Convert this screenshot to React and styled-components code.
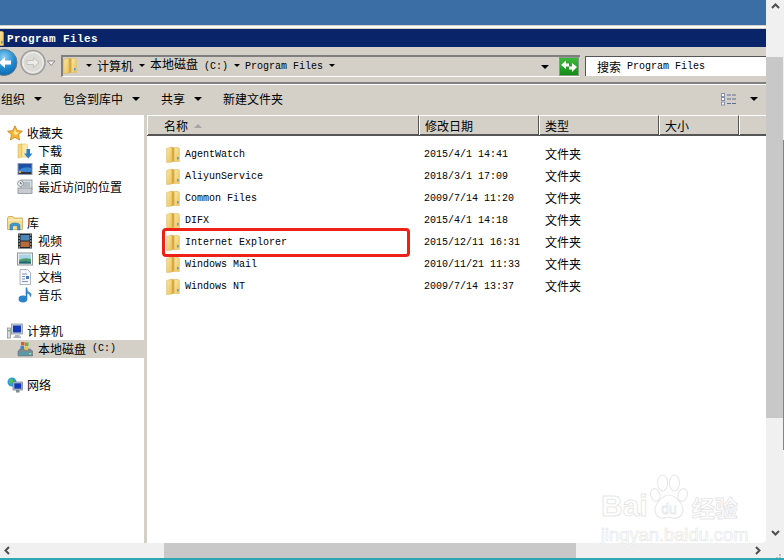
import React from "react";
import styled, { createGlobalStyle } from "styled-components";

const cjk = `"Noto Sans CJK SC", "Liberation Sans", sans-serif`;
const mono = `"Liberation Mono", "Noto Sans CJK SC", monospace`;
const face = "#d4d0c8";

const Global = createGlobalStyle`
	html, body {
		margin: 0;
		background: #fff;
		overflow: hidden;
	}
`;

const Screen = styled.div`
	position: relative;
	width: 784px;
	height: 560px;
	display: flex;
	flex-direction: column;
	overflow: hidden;
	font-family: ${cjk};
	font-size: 12px;
	line-height: 18px;
	color: #000;
	background: #f0f0f0;
`;

const TopArea = styled.div`
	display: flex;
	height: 543px;
`;

const Explorer = styled.div`
	width: 766px;
	display: flex;
	flex-direction: column;
	border-bottom-right-radius: 3px;
	overflow: hidden;
	background: ${face};
`;

const DesktopBand = styled.div`
	height: 25px;
	background: #3a6ea5;
`;

const WindowEdge = styled.div`
	height: 4px;
	background: #fff;
	border-top: 1px solid ${face};
	border-bottom: 1px solid ${face};
	box-sizing: border-box;
`;

const TitleBar = styled.div`
	height: 18px;
	box-sizing: border-box;
	padding-top: 1px;
	display: flex;
	align-items: center;
	background: #0a246a;
	color: #fff;
	font-family: ${mono};
	font-size: 11px;
	font-weight: 700;
	letter-spacing: 0.4px;
	overflow: hidden;

	svg {
		margin-left: -10px;
		margin-right: 3px;
		flex: none;
	}
`;

const AddressRow = styled.div`
	height: 37px;
	box-sizing: border-box;
	padding-top: 8px;
	display: flex;
	align-items: flex-start;
	border-bottom: 2px solid #808080;
`;

const NavGroup = styled.div`
	position: relative;
	width: 61px;
	height: 21px;
	flex: none;

	svg {
		position: absolute;
		top: -6px;
		left: 0;
	}
`;

const AddressBox = styled.div`
	width: 519px;
	height: 22px;
	box-sizing: border-box;
	display: flex;
	align-items: center;
	border: 2px solid #808080;
	border-right: 0;
	border-bottom: 1px solid #fff;
	flex: none;
`;

const Crumbs = styled.div`
	display: flex;
	align-items: center;
	flex: 1;
	height: 100%;
	padding-bottom: 2px;
	box-sizing: border-box;

	svg {
		margin-right: 9px;
		flex: none;
	}
`;

const Crumb = styled.span`
	white-space: pre;
	margin-right: 6px;
`;

const Latin = styled.span`
	font-family: ${mono};
	font-size: 10px;
`;

const Arrow = styled.i`
	display: block;
	flex: none;
	width: 0;
	height: 0;
	border-left: ${(p) => p.$size || 3}px solid transparent;
	border-right: ${(p) => p.$size || 3}px solid transparent;
	border-top: ${(p) => p.$size || 3}px solid #000;
`;

const CrumbArrow = styled(Arrow)`
	margin-right: 5px;
`;

const HistoryArrow = styled(Arrow)`
	margin: 0 10px;
`;

const GoButton = styled.div`
	width: 20px;
	height: 19px;
	margin-right: 1px;
	flex: none;
`;

const SearchBox = styled.div`
	margin: 1px 0 0 5px;
	flex: 1;
	height: 20px;
	box-sizing: border-box;
	display: flex;
	align-items: center;
	background: #fff;
	border-top: 1px solid #555;
	border-left: 1px solid #555;
	padding-left: 11px;
	white-space: pre;
`;

const CommandBar = styled.div`
	height: 31px;
	box-sizing: border-box;
	border-top: 1px solid #fff;
	padding: 0 8px 2px 1px;
	display: flex;
	align-items: center;
`;

const Command = styled.div`
	display: flex;
	align-items: center;
	margin-right: 21px;
	white-space: nowrap;

	${Arrow} {
		margin-left: 9px;
	}
`;

const ViewSwitch = styled.div`
	margin-left: auto;
	display: flex;
	align-items: center;

	${Arrow} {
		margin-left: 13px;
	}
`;

const Panes = styled.div`
	flex: 1;
	display: flex;
	min-height: 0;
`;

const NavPane = styled.div`
	width: 144px;
	box-sizing: border-box;
	padding-top: 9px;
	background: #fff;
	flex: none;
`;

const TreeGroup = styled.div`
	margin-bottom: 18px;
`;

const TreeRow = styled.div`
	height: 18px;
	display: flex;
	align-items: center;
	white-space: pre;
	padding-left: ${(p) => (p.$child ? 17 : 7)}px;
	background: ${(p) => (p.$selected ? face : "transparent")};

	svg {
		flex: none;
		margin-right: ${(p) => (p.$child ? 5 : 4)}px;
	}
`;

const Content = styled.div`
	margin-left: 3px;
	flex: 1;
	display: flex;
	flex-direction: column;
	background: #fff;
`;

const HeaderRow = styled.div`
	height: 19px;
	display: grid;
	grid-template-columns: 272px 120px 120px 80px 1fr;
	background: ${face};
	border-bottom: 2px solid #555;
`;

const HeaderCell = styled.div`
	display: flex;
	align-items: center;
	box-sizing: border-box;
	padding-top: 1px;
	border-top: 1px solid #fff;
	border-left: 1px solid #fff;
	border-right: ${(p) => (p.$last ? "0" : "1px solid #555")};
	padding-left: ${(p) => p.$pad || 5}px;
`;

const SortArrow = styled.i`
	display: block;
	width: 0;
	height: 0;
	margin-left: 6px;
	border-left: 4px solid transparent;
	border-right: 4px solid transparent;
	border-bottom: 4px solid #a5a5a5;
`;

const FileList = styled.div`
	padding-top: 7px;
`;

const FileRow = styled.div`
	height: 22px;
	display: grid;
	grid-template-columns: 272px 120px 1fr;
	align-items: center;
`;

const FileName = styled.div`
	display: flex;
	align-items: center;
	padding-left: 19px;
	white-space: pre;

	svg {
		margin-right: 5px;
	}
`;

const NameText = styled(Latin)`
	display: block;
	padding-top: 2px;
`;

const FileDate = styled(Latin)`
	display: block;
	padding: 2px 0 0 5px;
`;

const FileType = styled.div`
	padding-left: 6px;
`;

const VScroll = styled.div`
	position: relative;
	flex: 1;
	background: #f0f0f0;

	&::after {
		content: "";
		position: absolute;
		top: 140px;
		right: 0;
		width: 1px;
		height: 310px;
		background: #2fa6b4;
	}
`;

const ScrollArrow = styled.div`
	display: flex;
	justify-content: center;
	height: 15px;
	padding-top: 2px;
	box-sizing: border-box;
`;

const VThumb = styled.div`
	height: 361px;
	margin-top: 42px;
	margin-right: 1px;
	background: #c8c8c8;
`;

const VBottomArrow = styled(ScrollArrow)`
	margin-top: 108px;
`;

const HScroll = styled.div`
	height: 15px;
	display: flex;
	align-items: center;
	background: #f0f0f0;
`;

const HArrow = styled.div`
	display: flex;
	align-items: center;
	margin-left: ${(p) => p.$left}px;
`;

const HThumb = styled.div`
	width: 412px;
	height: 15px;
	margin-left: 152px;
	background: #c8c8c8;
`;

const Grip = styled.div`
	margin-left: 11px;
	width: 9px;
	height: 9px;
	margin-top: 5px;
`;

const TealLine = styled.div`
	height: 2px;
	background: #2fa6b4;
`;

const RedBox = styled.div`
	position: absolute;
	left: 162px;
	top: 228px;
	width: 248px;
	height: 29px;
	box-sizing: border-box;
	border: 3px solid #ee2118;
	border-radius: 4px;
`;

const Watermark = styled.div`
	position: absolute;
	left: 601px;
	top: 474px;
	width: 142px;
	color: #fff;
	-webkit-text-stroke: 1px #e8e8e8;
	pointer-events: none;
`;

const MarkTop = styled.div`
	display: flex;
	align-items: flex-end;
	height: 47px;
	white-space: nowrap;
`;

const MarkWord = styled.span`
	font-family: "Liberation Sans", sans-serif;
	font-weight: 700;
	font-size: 30px;
	line-height: 30px;
`;

const MarkCjk = styled.span`
	margin-left: 2px;
	font-size: 23px;
	line-height: 28px;
	font-weight: 700;
`;

const MarkUrl = styled.div`
	font-family: "Liberation Sans", sans-serif;
	font-size: 18.3px;
	line-height: 22px;
	margin-top: 3px;
	white-space: nowrap;
	-webkit-text-stroke: 0.7px #e8e8e8;
`;

const Folder = () => (
	<svg width="14" height="17" viewBox="0 0 14 17">
		<defs>
			<linearGradient id="folderLeaf" x1="0" y1="0" x2="1" y2="1">
				<stop offset="0" stopColor="#f9e6a0" />
				<stop offset="1" stopColor="#ecc45e" />
			</linearGradient>
		</defs>
		<path d="M.7 2.5 6 1V16L.7 16.5Z" fill="url(#folderLeaf)" stroke="#d8b35c" strokeWidth="0.6" />
		<path d="M6 1 8.5 1.5V15.5L6 16Z" fill="#d9a93f" />
		<path d="M8.5 1.5H12.4L13.4 2.5V15.5H8.5Z" fill="url(#folderLeaf)" stroke="#e0bd66" strokeWidth="0.6" />
		<rect x="11" y="11" width="1.6" height="2.4" fill="#4f9fd0" />
	</svg>
);

const Star = () => (
	<svg width="16" height="16" viewBox="0 0 16 16">
		<path d="M8 .8 10.2 5.6 15.4 6.2 11.5 9.7 12.6 15 8 12.3 3.4 15 4.5 9.7.6 6.2 5.8 5.6Z" fill="#f8b52e" stroke="#c97f1a" strokeWidth="0.8" />
		<path d="M8 4 9.2 7 12 7.5 9.8 9.5 8 10 6.5 8Z" fill="#ffe9a0" />
	</svg>
);

const Downloads = () => (
	<svg width="16" height="16" viewBox="0 0 16 16">
		<path d="M1 1.5 5 .8V14L1 15Z" fill="#f5d679" stroke="#d6ab4a" strokeWidth="0.5" />
		<path d="M5 1H9.5L10.5 2V14H5Z" fill="#fbe9ad" stroke="#dcb65a" strokeWidth="0.5" />
		<path d="M9.5 6H13V10.5H15.5L11.2 15.5 7 10.5H9.5Z" fill="#2a7fc8" />
	</svg>
);

const Desktop = () => (
	<svg width="16" height="16" viewBox="0 0 16 16">
		<rect x="0.5" y="2" width="15" height="12" fill="#8d9cb3" />
		<rect x="1.5" y="3" width="13" height="8" fill="#1d4fa5" />
		<path d="M1.5 9 Q7 5 14.5 7 V11 H1.5Z" fill="#3a86d4" />
		<rect x="1.5" y="11" width="13" height="2" fill="#2d3442" />
		<rect x="2" y="10" width="2" height="2" fill="#e8a52e" />
	</svg>
);

const Recent = () => (
	<svg width="16" height="16" viewBox="0 0 16 16">
		<rect x="4" y="1" width="11" height="9" fill="#d9dee2" stroke="#8a9298" strokeWidth="0.8" />
		<rect x="6" y="3" width="7" height="5" fill="#b2bcc4" />
		<rect x="1" y="9" width="14" height="5.5" fill="#c6ccd0" stroke="#8a9298" strokeWidth="0.8" />
		<circle cx="3.5" cy="4.5" r="3" fill="#e5e9ec" stroke="#7d858b" strokeWidth="0.8" />
		<path d="M3.5 3V4.7H5" stroke="#444" strokeWidth="0.7" fill="none" />
	</svg>
);

const Library = () => (
	<svg width="16" height="16" viewBox="0 0 16 16">
		<path d="M.5 3V14.5H15.5V3H7L6 1.5H1.5Z" fill="#f6dd93" stroke="#c9a655" strokeWidth="0.8" />
		<path d="M1 5H15" stroke="#fff3c9" />
		<path d="M3 15V10.5Q3 8 8 8T13 10.5V15H10.5V11Q8 10 5.5 11V15Z" fill="#3a96cf" stroke="#1f6c9f" strokeWidth="0.5" />
	</svg>
);

const Video = () => (
	<svg width="16" height="16" viewBox="0 0 16 16">
		<rect x="1" y="0.5" width="14" height="15" fill="#20262c" />
		<rect x="3.5" y="2" width="9" height="5.5" fill="#4d87b8" />
		<rect x="3.5" y="8.5" width="9" height="5.5" fill="#b76a3a" />
		<path d="M1.5 2H3M1.5 5H3M1.5 8H3M1.5 11H3M1.5 14H3M13 2H14.5M13 5H14.5M13 8H14.5M13 11H14.5M13 14H14.5" stroke="#cfd6dc" />
	</svg>
);

const Pictures = () => (
	<svg width="16" height="16" viewBox="0 0 16 16">
		<rect x="0.5" y="2" width="15" height="12" fill="#f3f3f3" stroke="#8e9499" />
		<rect x="2" y="3.5" width="12" height="9" fill="#a9d3e8" />
		<path d="M2 9Q7 6 14 8V12.5H2Z" fill="#4c9a6c" />
		<path d="M2 11Q8 9.5 14 11V12.5H2Z" fill="#26667c" />
	</svg>
);

const Documents = () => (
	<svg width="16" height="16" viewBox="0 0 16 16">
		<path d="M3 .5H10.5L13.5 3.5V15.5H3Z" fill="#f6f7fa" stroke="#9aa3ad" strokeWidth="0.8" />
		<path d="M5 5H10M5 7.5H8M5 10H8M5 12.5H11" stroke="#8490b4" />
		<rect x="9" y="7" width="3" height="3" fill="#3f7cc4" />
	</svg>
);

const Music = () => (
	<svg width="16" height="16" viewBox="0 0 16 16">
		<path d="M9.5 .5V11" stroke="#2f7dc3" strokeWidth="1.6" />
		<path d="M9.5 .5Q10 4 13 5.5T13 10.5Q13 7 10 6.5Z" fill="#3f8fd0" />
		<ellipse cx="6" cy="12" rx="4.4" ry="3.4" fill="#2a83cd" />
	</svg>
);

const Computer = () => (
	<svg width="16" height="16" viewBox="0 0 16 16">
		<rect x="0.5" y="5" width="3" height="10" fill="#d8dcdf" stroke="#7f878c" strokeWidth="0.7" />
		<rect x="1.3" y="7" width="1.4" height="1.4" fill="#3bb34a" />
		<rect x="4.5" y="1" width="11" height="10" fill="#c9d2da" stroke="#7f8b94" strokeWidth="0.7" />
		<rect x="6" y="2.5" width="8" height="7" fill="#1339b8" />
		<path d="M8 12H12.5V13.5H14V15H6.5V13.5H8Z" fill="#aab3ba" />
	</svg>
);

const Drive = () => (
	<svg width="16" height="16" viewBox="0 0 16 16">
		<path d="M1 10 3 8H13L15.5 10V15H1Z" fill="#7d8a92" stroke="#55606a" strokeWidth="0.5" />
		<rect x="1.5" y="11" width="13.5" height="3.4" fill="#5a9aa8" />
		<rect x="12.5" y="12" width="1.6" height="1.4" fill="#b6f0a0" />
		<rect x="4" y="1" width="3.5" height="3.5" fill="#e2572f" />
		<rect x="8" y="1.5" width="3.5" height="3.5" fill="#68b13f" />
		<rect x="3.5" y="5" width="3.5" height="3.5" fill="#3b85d8" />
		<rect x="7.5" y="5.5" width="3.5" height="3.5" fill="#f0c32e" />
	</svg>
);

const Network = () => (
	<svg width="16" height="16" viewBox="0 0 16 16">
		<circle cx="5" cy="5" r="4.5" fill="#2f9ad8" />
		<path d="M2 2.5Q5 1 6 3T4 7L2 6Z" fill="#4cc04e" />
		<rect x="6" y="5" width="9.5" height="8" fill="#b8c4ce" stroke="#6f7e89" strokeWidth="0.7" />
		<rect x="7.3" y="6.3" width="7" height="5.4" fill="#1339b8" />
		<rect x="9" y="13" width="3.5" height="2.5" fill="#7f8b94" />
	</svg>
);

const ViewIcon = () => (
	<svg width="16" height="13" viewBox="0 0 16 13">
		<rect x="0.5" y="0.5" width="3" height="3" fill="#fff" stroke="#8590b0" />
		<rect x="0.5" y="4.5" width="3" height="3" fill="#fff" stroke="#8590b0" />
		<rect x="0.5" y="9" width="3" height="3" fill="#fff" stroke="#8590b0" />
		<path d="M6 2H15M6 6H15M6 10.5H15" stroke="#5f6d92" strokeDasharray="4 1" />
	</svg>
);

const NavButtons = () => (
	<svg width="58" height="32" viewBox="0 0 58 32">
		<defs>
			<radialGradient id="backBlue" cx="50%" cy="30%" r="80%">
				<stop offset="0" stopColor="#8fd0f2" />
				<stop offset="0.5" stopColor="#1e8cd2" />
				<stop offset="1" stopColor="#0a5a9e" />
			</radialGradient>
		</defs>
		<circle cx="4" cy="13.5" r="13" fill="url(#backBlue)" stroke="#5f7d96" />
		<path d="M-1 13.5 5 8V11.5H11V15.5H5V19Z" fill="#fff" />
		<circle cx="33" cy="13.5" r="12" fill="#dcdad5" stroke="#9d9d9d" strokeWidth="1.5" />
		<circle cx="33" cy="13.5" r="10" fill="none" stroke="#f2f2f0" />
		<path d="M39 13.5 33.5 8.5V11.5H27V15.5H33.5V18.5Z" fill="#ecebe8" stroke="#b5b5b2" strokeWidth="0.7" />
		<path d="M47.5 12H55L51.2 16.5Z" fill="#eee" stroke="#8d8d8d" />
	</svg>
);

const GoIcon = () => (
	<svg width="20" height="19" viewBox="0 0 20 19">
		<defs>
			<linearGradient id="goGreen" x1="0" y1="0" x2="0" y2="1">
				<stop offset="0" stopColor="#3dbb3d" />
				<stop offset="1" stopColor="#128a18" />
			</linearGradient>
		</defs>
		<rect x="0.5" y="0.5" width="19" height="18" fill="url(#goGreen)" stroke="#8a9a8a" />
		<path d="M2 8 7 3.5V6.5H10V9.5H7V12Z" fill="#fff" />
		<path d="M18 10 13 15V12.5H10V9.5H13V6Z" fill="#fff" />
	</svg>
);

const Chevron = ({ d }) => (
	<svg width="9" height="9" viewBox="0 0 9 9">
		<path d={d} fill="none" stroke="#4f4f4f" strokeWidth="2" />
	</svg>
);

const Paw = () => (
	<svg width="42" height="47" viewBox="0 0 46 47" style={{ flex: "none" }} preserveAspectRatio="none">
		<g fill="#fff" stroke="#e8e8e8" strokeWidth="1.2">
			<ellipse cx="8" cy="21" rx="5" ry="6.5" transform="rotate(-25 8 21)" />
			<ellipse cx="16" cy="9" rx="5.5" ry="8" />
			<ellipse cx="29" cy="9" rx="5.5" ry="8" />
			<ellipse cx="38" cy="21" rx="5" ry="6.5" transform="rotate(25 38 21)" />
			<path d="M23 21C30 21 40 31 38 38 36 45 28 45 23 43 18 45 10 45 8 38 6 31 16 21 23 21Z" />
		</g>
		<text x="23" y="40" textAnchor="middle" fontFamily="Liberation Sans" fontSize="15" fill="#fff" stroke="#e8e8e8" strokeWidth="0.8">du</text>
	</svg>
);

const tree = [
	[
		{ icon: Star, label: "收藏夹" },
		{ icon: Downloads, label: "下载", child: true },
		{ icon: Desktop, label: "桌面", child: true },
		{ icon: Recent, label: "最近访问的位置", child: true },
	],
	[
		{ icon: Library, label: "库" },
		{ icon: Video, label: "视频", child: true },
		{ icon: Pictures, label: "图片", child: true },
		{ icon: Documents, label: "文档", child: true },
		{ icon: Music, label: "音乐", child: true },
	],
	[
		{ icon: Computer, label: "计算机" },
		{ icon: Drive, label: "本地磁盘", latin: " (C:)", child: true, selected: true },
	],
	[{ icon: Network, label: "网络" }],
];

const files = [
	{ name: "AgentWatch", date: "2015/4/1 14:41" },
	{ name: "AliyunService", date: "2018/3/1 17:09" },
	{ name: "Common Files", date: "2009/7/14 11:20" },
	{ name: "DIFX", date: "2015/4/1 14:18" },
	{ name: "Internet Explorer", date: "2015/12/11 16:31" },
	{ name: "Windows Mail", date: "2010/11/21 11:33" },
	{ name: "Windows NT", date: "2009/7/14 13:37" },
];

export default function App() {
	return (
		<Screen>
			<Global />
			<TopArea>
				<Explorer>
					<DesktopBand />
					<WindowEdge />
					<TitleBar>
						<Folder />
						Program Files
					</TitleBar>
					<AddressRow>
						<NavGroup>
							<NavButtons />
						</NavGroup>
						<AddressBox>
							<Crumbs>
								<Folder />
								<CrumbArrow />
								<Crumb>计算机</Crumb>
								<CrumbArrow />
								<Crumb>
									本地磁盘
									<Latin> (C:)</Latin>
								</Crumb>
								<CrumbArrow />
								<Crumb>
									<Latin>Program Files</Latin>
								</Crumb>
								<CrumbArrow />
							</Crumbs>
							<HistoryArrow $size={4} />
							<GoButton>
								<GoIcon />
							</GoButton>
						</AddressBox>
						<SearchBox>
							搜索
							<Latin> Program Files</Latin>
						</SearchBox>
					</AddressRow>
					<CommandBar>
						<Command>
							组织
							<Arrow $size={4} />
						</Command>
						<Command>
							包含到库中
							<Arrow $size={4} />
						</Command>
						<Command>
							共享
							<Arrow $size={4} />
						</Command>
						<Command>新建文件夹</Command>
						<ViewSwitch>
							<ViewIcon />
							<Arrow $size={4} />
						</ViewSwitch>
					</CommandBar>
					<Panes>
						<NavPane>
							{tree.map((group, i) => (
								<TreeGroup key={i}>
									{group.map((item) => (
										<TreeRow key={item.label} $child={item.child} $selected={item.selected}>
											<item.icon />
											{item.label}
											{item.latin && <Latin>{item.latin}</Latin>}
										</TreeRow>
									))}
								</TreeGroup>
							))}
						</NavPane>
						<Content>
							<HeaderRow>
								<HeaderCell $pad={16}>
									名称
									<SortArrow />
								</HeaderCell>
								<HeaderCell>修改日期</HeaderCell>
								<HeaderCell>类型</HeaderCell>
								<HeaderCell>大小</HeaderCell>
								<HeaderCell $last />
							</HeaderRow>
							<FileList>
								{files.map((file) => (
									<FileRow key={file.name}>
										<FileName>
											<Folder />
											<NameText>{file.name}</NameText>
										</FileName>
										<FileDate>{file.date}</FileDate>
										<FileType>文件夹</FileType>
									</FileRow>
								))}
							</FileList>
						</Content>
					</Panes>
				</Explorer>
				<VScroll>
					<ScrollArrow>
						<Chevron d="M1 6 4.5 2.5 8 6" />
					</ScrollArrow>
					<VThumb />
					<VBottomArrow>
						<Chevron d="M1 3 4.5 6.5 8 3" />
					</VBottomArrow>
				</VScroll>
			</TopArea>
			<HScroll>
				<HArrow $left={3}>
					<Chevron d="M6 1 2.5 4.5 6 8" />
				</HArrow>
				<HThumb />
				<HArrow $left={177}>
					<Chevron d="M3 1 6.5 4.5 3 8" />
				</HArrow>
				<Grip>
					<svg width="9" height="9" viewBox="0 0 9 9">
						<path d="M6 0h2v2H6zM3 3h2v2H3zM6 3h2v2H6zM0 6h2v2H0zM3 6h2v2H3zM6 6h2v2H6z" fill="#bdbdbd" />
					</svg>
				</Grip>
			</HScroll>
			<TealLine />
			<RedBox />
			<Watermark>
				<MarkTop>
					<MarkWord>Bai</MarkWord>
					<Paw />
					<MarkCjk>经验</MarkCjk>
				</MarkTop>
				<MarkUrl>jingyan.baidu.com</MarkUrl>
			</Watermark>
		</Screen>
	);
}
